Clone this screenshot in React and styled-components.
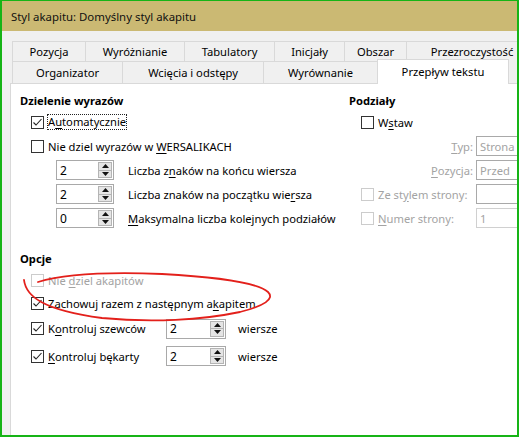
import styled, { createGlobalStyle } from "styled-components";

const GlobalStyle = createGlobalStyle`
  html, body {
    margin: 0;
    padding: 0;
    background: #ffffff;
  }
  body {
    font-family: "Noto Sans", "Open Sans", sans-serif;
    font-size: 11.2px;
    color: #000;
  }
`;

const Window = styled.div`
  position: relative;
  width: 519px;
  height: 437px;
  box-sizing: border-box;
  border: 2px solid #16b416;
  border-top-width: 1px;
  display: flex;
  flex-direction: column;
  overflow: hidden;
  background: #f0f0f0;
`;

const TitleBar = styled.div`
  flex: none;
  height: 30px;
  display: flex;
  align-items: center;
  padding-left: 9px;
  background: #cbb973;
  font-size: 11.4px;
  color: #111;
`;

const Body = styled.div`
  flex: 1;
  display: flex;
  flex-direction: column;
  padding: 10px 0 0 8px;
  min-height: 0;
`;

const TabRow = styled.div`
  flex: none;
  display: flex;
  align-items: flex-end;
  height: ${({ h }) => h}px;
  margin-left: 2px;
`;

const Tab = styled.div`
  flex: none;
  box-sizing: border-box;
  width: ${({ w }) => w}px;
  height: ${({ h }) => h}px;
  display: flex;
  align-items: center;
  justify-content: center;
  border: 1px solid #d9d9d9;
  border-bottom: none;
  border-right: none;
  background: #f0f0f0;
  white-space: nowrap;
  &:last-child {
    border-right: 1px solid #d9d9d9;
  }
  ${({ active }) =>
    active &&
    `
    position: relative;
    z-index: 1;
    background: #ffffff;
    margin-bottom: -1px;
    padding-bottom: 2px;
  `}
`;

const Panel = styled.div`
  flex: 1;
  display: grid;
  grid-template-columns: 329px 200px;
  align-content: start;
  margin-right: -40px;
  padding: 8px 0 0 9px;
  background: #ffffff;
  border-top: 1px solid #d9d9d9;
  border-left: 1px solid #d9d9d9;
`;

const Column = styled.div`
  display: flex;
  flex-direction: column;
`;

const SectionTitle = styled.div`
  height: 18px;
  line-height: 18px;
  font-weight: 700;
  margin-top: ${({ gap }) => gap || 0}px;
`;

const Row = styled.div`
  display: flex;
  align-items: center;
  height: ${({ h }) => h || 24}px;
  padding-left: ${({ indent }) => indent}px;
  color: ${({ disabled }) => (disabled ? "#a3a3a3" : "#000")};
  white-space: nowrap;
`;

const Box = styled.span`
  flex: none;
  box-sizing: border-box;
  width: 13px;
  height: 13px;
  margin-right: 4px;
  border: 1px solid ${({ disabled }) => (disabled ? "#cccccc" : "#333333")};
  background: #ffffff;
  display: flex;
  align-items: center;
  justify-content: center;
`;

const Label = styled.span`
  display: inline-block;
  width: ${({ w }) => (w ? `${w}px` : "auto")};
  ${({ focus }) =>
    focus &&
    `
    outline: 1px dotted #222;
    outline-offset: 0px;
    line-height: 14px;
  `}
`;

const Mn = styled.span`
  text-decoration: underline;
  text-underline-offset: 2px;
`;

const Spin = styled.div`
  flex: none;
  box-sizing: border-box;
  width: ${({ w }) => w}px;
  height: 20px;
  display: flex;
  align-items: center;
  border: 1px solid #a9a9a9;
  background: #ffffff;
  padding-left: 3px;
  margin-right: ${({ gap }) => gap}px;
  font-size: 12px;
`;

const SpinValue = styled.span`
  flex: 1;
`;

const SpinButtons = styled.div`
  display: flex;
  flex-direction: column;
  width: 14px;
  height: 16px;
  margin-right: 1px;
`;

const SpinBtn = styled.div`
  flex: 1;
  display: flex;
  align-items: center;
  justify-content: center;
  background: #e5e5e5;
  border: 1px solid #b4b4b4;
  & + & {
    border-top: none;
  }
`;

const FormGrid = styled.div`
  display: grid;
  grid-template-columns: 112px 80px;
  column-gap: 3px;
  grid-auto-rows: 24px;
  align-items: center;
  padding-left: 12px;
  color: #a3a3a3;
`;

const FieldLabel = styled.span`
  justify-self: ${({ start }) => (start ? "start" : "end")};
  display: flex;
  align-items: center;
  white-space: nowrap;
`;

const Field = styled.div`
  box-sizing: border-box;
  height: 20px;
  display: flex;
  align-items: center;
  padding-left: 3px;
  border: 1px solid ${({ light }) => (light ? "#d0d0d0" : "#a9a9a9")};
  background: #ffffff;
  color: #a3a3a3;
`;

const Scribble = styled.svg`
  position: absolute;
  left: 0;
  top: 0;
  pointer-events: none;
`;

const Check = ({ checked, disabled }) => (
  <Box disabled={disabled}>
    {checked && (
      <svg width="11" height="11" viewBox="0 0 11 11">
        <path d="M1.5 5.5 L4 8 L9.5 2" fill="none" stroke="#222" strokeWidth="1.1" />
      </svg>
    )}
  </Box>
);

const Spinner = ({ value, w, gap }) => (
  <Spin w={w} gap={gap}>
    <SpinValue>{value}</SpinValue>
    <SpinButtons>
      <SpinBtn>
        <svg width="7" height="4" viewBox="0 0 7 4">
          <path d="M0 4 L3.5 0 L7 4 Z" fill="#111" />
        </svg>
      </SpinBtn>
      <SpinBtn>
        <svg width="7" height="4" viewBox="0 0 7 4">
          <path d="M0 0 L3.5 4 L7 0 Z" fill="#111" />
        </svg>
      </SpinBtn>
    </SpinButtons>
  </Spin>
);

const topTabs = [
  ["Pozycja", 73],
  ["Wyróżnianie", 99],
  ["Tabulatory", 90],
  ["Inicjały", 70],
  ["Obszar", 62],
  ["Przezroczystość", 132],
];

const bottomTabs = [
  ["Organizator", 110],
  ["Wcięcia i odstępy", 141],
  ["Wyrównanie", 114],
  ["Przepływ tekstu", 132, true],
];

export default function App() {
  return (
    <>
      <GlobalStyle />
      <Window>
        <TitleBar>Styl akapitu: Domyślny styl akapitu</TitleBar>
        <Body>
          <TabRow h={20}>
            {topTabs.map(([t, w]) => (
              <Tab key={t} w={w} h={20}>
                {t}
              </Tab>
            ))}
          </TabRow>
          <TabRow h={22}>
            {bottomTabs.map(([t, w, active]) => (
              <Tab key={t} w={w} h={active ? 25 : 22} active={active}>
                {t}
              </Tab>
            ))}
          </TabRow>
          <Panel>
            <Column>
              <SectionTitle>Dzielenie wyrazów</SectionTitle>
              <Row indent={11}>
                <Check checked />
                <Label focus>
                  A<Mn>u</Mn>tomatycznie
                </Label>
              </Row>
              <Row indent={11}>
                <Check />
                <Label>
                  Nie dziel wyrazów w <Mn>W</Mn>ERSALIKACH
                </Label>
              </Row>
              <Row indent={36}>
                <Spinner value="2" w={58} gap={14} />
                <Label>
                  Liczba z<Mn>n</Mn>aków na końcu wiersza
                </Label>
              </Row>
              <Row indent={36}>
                <Spinner value="2" w={58} gap={14} />
                <Label>
                  Liczba znaków na początku wie<Mn>r</Mn>sza
                </Label>
              </Row>
              <Row indent={36}>
                <Spinner value="0" w={58} gap={14} />
                <Label>
                  <Mn>M</Mn>aksymalna liczba kolejnych podziałów
                </Label>
              </Row>

              <SectionTitle gap={20}>Opcje</SectionTitle>
              <Row indent={11} disabled>
                <Check disabled />
                <Label>
                  Nie <Mn>d</Mn>ziel akapitów
                </Label>
              </Row>
              <Row indent={11} h={23}>
                <Check checked />
                <Label>
                  Zachowuj razem z następnym a<Mn>k</Mn>apitem
                </Label>
              </Row>
              <Row indent={11} h={27}>
                <Check checked />
                <Label w={118}>
                  K<Mn>o</Mn>ntroluj szewców
                </Label>
                <Spinner value="2" w={60} gap={12} />
                <span>wiersze</span>
              </Row>
              <Row indent={11} h={28}>
                <Check checked />
                <Label w={118}>
                  <Mn>K</Mn>ontroluj bękarty
                </Label>
                <Spinner value="2" w={60} gap={12} />
                <span>wiersze</span>
              </Row>
            </Column>

            <Column>
              <SectionTitle>Podziały</SectionTitle>
              <Row indent={12}>
                <Check />
                <Label>
                  W<Mn>s</Mn>taw
                </Label>
              </Row>
              <FormGrid>
                <FieldLabel>
                  <Mn>T</Mn>yp:
                </FieldLabel>
                <Field>Strona</Field>
                <FieldLabel>
                  <Mn>P</Mn>ozycja:
                </FieldLabel>
                <Field>Przed</Field>
                <FieldLabel start>
                  <Check disabled />
                  Ze st<Mn>y</Mn>lem strony:
                </FieldLabel>
                <Field />
                <FieldLabel start>
                  <Check disabled />
                  <Mn>N</Mn>umer strony:
                </FieldLabel>
                <Field light>1</Field>
              </FormGrid>
            </Column>
          </Panel>
        </Body>
        <Scribble width="519" height="437" viewBox="0 0 519 437">
          <path
            d="M22 279 C24 295, 40 309, 100 317 C150 322, 200 319, 238 311 C262 305, 273 298, 266 291 C256 282, 215 276, 160 273 C110 271, 62 273, 36 281"
            fill="none"
            stroke="#e3201b"
            strokeWidth="1.8"
            strokeLinecap="round"
          />
        </Scribble>
      </Window>
    </>
  );
}
